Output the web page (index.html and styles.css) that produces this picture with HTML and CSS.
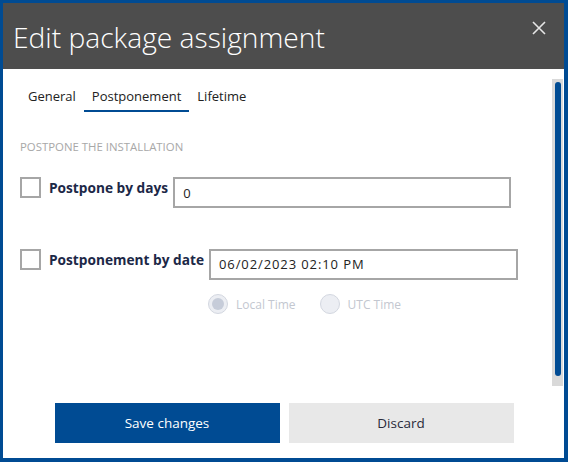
FILE: index.html
```html
<!DOCTYPE html>
<html>
<head>
<meta charset="utf-8">
<link rel="stylesheet" href="styles.css">
</head>
<body>
<div class="dialog">
  <header class="header">
    <h1 class="title">Edit package assignment</h1>
    <span class="close" aria-label="Close">
      <svg width="14" height="14" viewBox="0 0 14 14"><path d="M1 1L13 13M13 1L1 13" stroke="#e6e6e6" stroke-width="1.6" fill="none"/></svg>
    </span>
  </header>
  <div class="body">
    <div class="content">
      <nav class="tabs">
        <span class="tab">General</span>
        <span class="tab active">Postponement</span>
        <span class="tab">Lifetime</span>
      </nav>
      <div class="section">POSTPONE THE INSTALLATION</div>
      <div class="row row-days">
        <span class="checkbox"></span>
        <span class="label">Postpone by days</span>
        <div class="input input-days">0</div>
      </div>
      <div class="row row-date">
        <span class="checkbox"></span>
        <span class="label">Postponement by date</span>
        <div class="input input-date">06/02/2023 02:10 PM</div>
      </div>
      <div class="radios">
        <span class="radio checked"><span class="dot"></span></span>
        <span class="radio-label">Local Time</span>
        <span class="radio"></span>
        <span class="radio-label">UTC Time</span>
      </div>
    </div>
    <div class="scrolltrack"><div class="thumb"></div></div>
  </div>
  <footer class="footer">
    <button class="btn primary">Save changes</button>
    <button class="btn secondary">Discard</button>
  </footer>
</div>
</body>
</html>
```
FILE: styles.css
```css
* { box-sizing: border-box; }
html, body { margin: 0; padding: 0; }
body {
  width: 568px;
  height: 462px;
  font-family: "Open Sans", "Noto Sans", sans-serif;
  background: #fff;
}
.dialog {
  width: 568px;
  height: 462px;
  border-style: solid;
  border-color: #004b93;
  border-width: 3px 4px 4px 3px;
  display: flex;
  flex-direction: column;
  background: #fff;
}
.header {
  height: 66px;
  background: #4d4d4d;
  display: flex;
  align-items: center;
  justify-content: space-between;
  padding: 0 18px 0 10px;
}
.title {
  margin: 0;
  font-weight: 300;
  font-size: 28.2px;
  color: #fff;
  letter-spacing: 0;
  padding-top: 1px;
}
.close {
  display: flex;
  margin-top: -16px;
}
.body {
  display: flex;
  height: 320px;
}
.content {
  flex: 1;
  padding-left: 17px;
}
.tabs {
  display: flex;
  margin-top: 12px;
}
.tab {
  font-size: 13px;
  line-height: 20px;
  padding: 5px 8px 4px;
  color: #222;
  border-bottom: 2px solid transparent;
}
.tab.active {
  border-bottom-color: #004b93;
}
.section {
  margin-top: 27px;
  font-size: 11.4px;
  line-height: 16px;
  color: #a8a8a8;
  letter-spacing: 0;
}
.row {
  display: flex;
  align-items: flex-start;
  margin-top: 22px;
}
.row-date { margin-top: 41px; }
.checkbox {
  width: 21px;
  height: 21px;
  border: 2px solid #a6a6a6;
  flex: none;
}
.label {
  font-weight: 700;
  font-size: 13.7px;
  color: #1c2847;
  margin-left: 8px;
  margin-right: 5px;
  line-height: 22px;
  letter-spacing: 0;
}
.input {
  height: 31px;
  border: 2px solid #a6a6a6;
  font-size: 13px;
  color: #222;
  padding: 6px 0 0 8px;
  line-height: 17px;
}
.input-days { width: 338px; }
.input-date { width: 309px; letter-spacing: 0.9px; padding-top: 5px; }
.radios {
  display: flex;
  align-items: center;
  margin-top: 14px;
  margin-left: 188px;
}
.radio {
  width: 20px;
  height: 20px;
  border-radius: 50%;
  border: 1px solid #d3d7e0;
  background: #eceef3;
  display: flex;
  align-items: center;
  justify-content: center;
}
.radio .dot {
  width: 12px;
  height: 12px;
  border-radius: 50%;
  background: #c6ccd9;
}
.radio-label {
  font-size: 12px;
  color: #c3c7d0;
  margin-left: 8px;
  margin-right: 24px;
}
.scrolltrack {
  width: 11px;
  height: 307px;
  margin-top: 10px;
  margin-right: 1px;
  background: #d9d9d9;
  padding: 3px 2px 0 3px;
}
.thumb {
  width: 6px;
  height: 294px;
  border-radius: 3px;
  background: #004b93;
}
.footer {
  display: flex;
  justify-content: center;
  gap: 9px;
  margin-top: 14px;
  padding-left: 1px;
}
.btn {
  width: 225px;
  height: 40px;
  border: none;
  font-family: inherit;
  font-size: 13.5px;
}
.primary { background: #004b93; color: #fff; }
.secondary { background: #e8e8e8; color: #2a2a3a; }
```
